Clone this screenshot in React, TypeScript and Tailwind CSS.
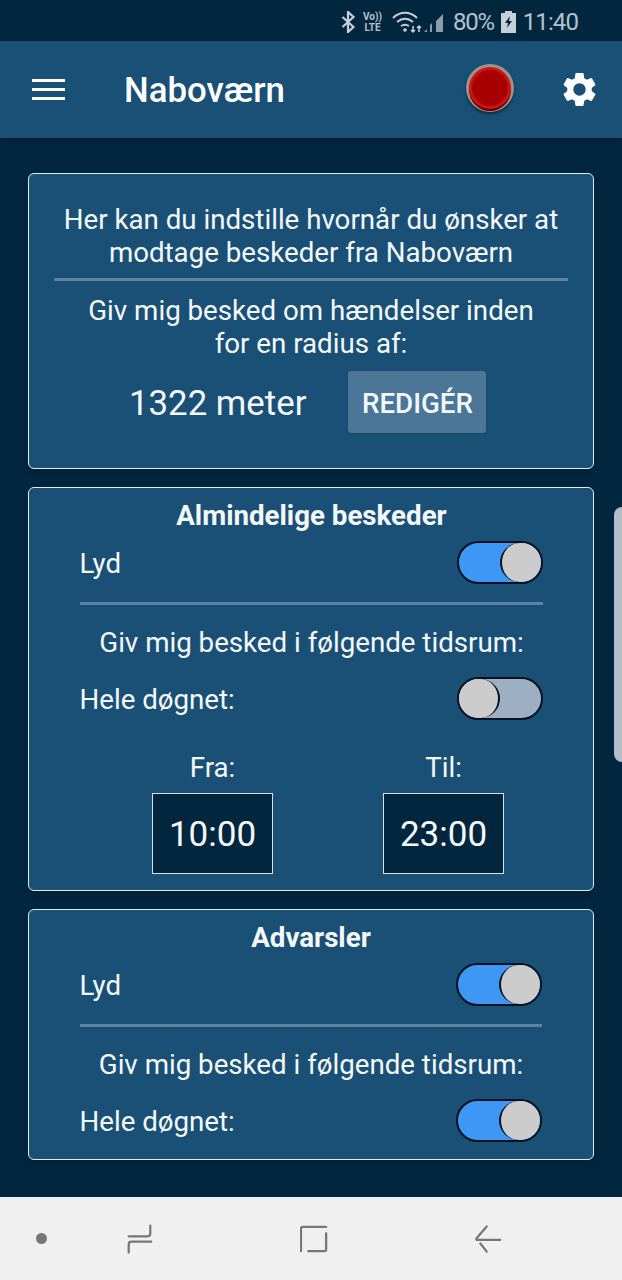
import { MdSettings } from "react-icons/md";

function Toggle({ on, dim }: { on: boolean; dim?: boolean }) {
  return (
    <div
      className={`flex h-[43px] w-[86px] rounded-full border-2 border-[#04121f] ${
        on ? "justify-end bg-[#3f97f5]" : "justify-start"
      } ${dim ? "bg-[#9db0c3]" : ""}`}
    >
      <div
        className={`h-[39px] w-[41px] rounded-full bg-[#cccccc] ${
          on ? "border-l-2" : "border-r-2"
        } border-[#04121f]`}
      />
    </div>
  );
}

function Divider({ className }: { className: string }) {
  return <div className={`h-[3px] bg-[#5b84a0] ${className}`} />;
}

function TimeBox({ label, time }: { label: string; time: string }) {
  return (
    <div className="flex w-[121px] flex-col items-center">
      <div className="text-[27.7px] leading-[30px]">{label}</div>
      <div className="mt-[10px] flex h-[81px] w-[121px] items-center justify-center border border-[#d5e2ec] bg-[#03263f] pt-[3px] text-[35px]">
        {time}
      </div>
    </div>
  );
}

function StatusBar() {
  return (
    <div className="flex h-[41px] items-center justify-end bg-[#03263f] pr-[44px] pt-[3px] text-[#b3c2cd]">
      <svg width="15" height="22" viewBox="0 0 14 22" fill="none" stroke="#c5d0d8" strokeWidth="2.2" className="mr-[6px]">
        <path d="M1 6l11 10-5.500 5V1L12 6 1 16" />
      </svg>
      <div className="mr-[9px] flex w-[21px] flex-col items-center whitespace-nowrap text-[10px] font-bold leading-[11px]">
        <span>Vo))</span>
        <span>LTE</span>
      </div>
      <svg width="52" height="24" viewBox="0 0 52 24" fill="none" className="mr-[9px]">
        <path d="M1 8c7-7 17-7 24 0M5 12c5-4 11-4 16 0M9 16c3-2 5-2 8 0" stroke="#c5d0d8" strokeWidth="2" />
        <circle cx="13" cy="20" r="1.800" fill="#c5d0d8" />
        <path d="M21 16v6M19 20l2 2 2-2M27 22v-6M25 18l2-2 2 2" stroke="#c5d0d8" strokeWidth="1.500" />
        <path d="M32 22h3v-3zM38 22h2v-9l-2 2zM44 22h7V4l-7 7z" fill="#8b9ba8" />
      </svg>
      <span className="text-[24px] leading-none tracking-[-1.3px]">80%</span>
      <svg width="15" height="22" viewBox="0 0 15 22" className="ml-[7px] mr-[7px]">
        <path d="M4 0h7v2h4v20H0V2h4z" fill="#c5d0d8" />
        <path d="M9 5L4 12h3l-1 5 5-7H8z" fill="#03263f" />
      </svg>
      <span className="text-[24px] leading-none tracking-[-0.9px]">11:40</span>
    </div>
  );
}

function Header() {
  return (
    <div className="relative flex h-[97px] items-center bg-[#1a5075] pl-[32px] pr-[22px] text-white shadow-[0_2px_4px_rgba(0,0,0,0.25)]">
      <div className="flex w-[33px] flex-col gap-[6px]">
        <div className="h-[3px] bg-white" />
        <div className="h-[3px] bg-white" />
        <div className="h-[3px] bg-white" />
      </div>
      <div className="ml-[59px] mt-[2px] flex-1 text-[34.8px] font-medium">Naboværn</div>
      <div className="mb-[3px] mr-[45px] flex h-[48px] w-[48px] items-center justify-center rounded-full bg-[#99948e] shadow-[0_2px_3px_rgba(0,0,0,0.5)]">
        <div className="h-[42px] w-[42px] rounded-full border-[3px] border-[#cf1313] bg-[#a80000] shadow-[0_2px_0_#600]" />
      </div>
      <MdSettings size={41} />
    </div>
  );
}

function BottomNav() {
  return (
    <div className="flex h-[83px] items-center bg-[#f0f0f0] pl-[36px]">
      <div className="h-[11px] w-[11px] rounded-full bg-[#777777]" />
      <svg width="27" height="32" viewBox="0 0 30 32" fill="none" stroke="#777777" strokeWidth="2.500" strokeLinecap="round" className="ml-[79px]">
        <path d="M27 1v9q0 3-3 3H3M28 19H6q-3 0-3 3v9" />
      </svg>
      <svg width="28" height="30" viewBox="0 0 30 30" fill="none" stroke="#777777" strokeWidth="2.500" strokeLinecap="round" className="ml-[147px]">
        <path d="M1 28V4q0-2 2-2h25M9 28h17q2 0 2-2V9" />
      </svg>
      <svg width="27" height="30" viewBox="0 0 30 30" fill="none" stroke="#777777" strokeWidth="2.500" strokeLinecap="round" className="ml-[147px]">
        <path d="M13 1L2 14q-1 1 0 2h26M6 20l7 9" />
      </svg>
    </div>
  );
}

export default function App() {
  return (
    <div className="relative flex h-[1280px] w-[622px] flex-col overflow-hidden bg-[#03263f] font-['Roboto',sans-serif] text-[#f4f8fb]">
      <StatusBar />
      <Header />

      <main className="flex flex-1 flex-col gap-[18px] px-[28px] pt-[35px]">
        <section className="flex h-[296px] flex-col items-center rounded-[6px] border border-[#e4edf3] bg-[#1a5075] px-[25px] pt-[29px] shadow-md">
          <p className="text-center text-[27.7px] leading-[33px]">
            Her kan du indstille hvornår du ønsker at
            <br />
            modtage beskeder fra Naboværn
          </p>
          <Divider className="mt-[9px] w-full" />
          <p className="mt-[13px] text-center text-[27.7px] leading-[33px]">
            Giv mig besked om hændelser inden
            <br />
            for en radius af:
          </p>
          <div className="mt-[11px] flex w-full items-center pl-[75px]">
            <span className="pt-[2px] text-[34.8px]">1322 meter</span>
            <button className="ml-[42px] h-[62px] w-[138px] rounded-[3px] bg-[#4b7698] pt-[3px] text-[27.7px] font-medium shadow">
              REDIGÉR
            </button>
          </div>
        </section>

        <section className="flex h-[404px] flex-col rounded-[6px] border border-[#e4edf3] bg-[#1a5075] pl-[51px] pr-[50px] pt-[13px] shadow-md">
          <h2 className="text-center text-[27.7px] font-bold leading-[30px]">Almindelige beskeder</h2>
          <div className="mt-[10px] flex items-center justify-between text-[27.7px] leading-[30px]">
            <span className="-ml-[0.5px] pt-[2px]">Lyd</span>
            <Toggle on />
          </div>
          <Divider className="mt-[18px]" />
          <p className="mt-[23px] text-center text-[27.7px] leading-[30px]">Giv mig besked i følgende tidsrum:</p>
          <div className="mt-[19px] flex items-center justify-between text-[27.7px] leading-[30px]">
            <span className="-ml-[0.5px] pt-[2px]">Hele døgnet:</span>
            <Toggle on={false} dim />
          </div>
          <div className="mt-[33px] flex gap-[110px] pl-[72px]">
            <TimeBox label="Fra:" time="10:00" />
            <TimeBox label="Til:" time="23:00" />
          </div>
        </section>

        <section className="flex h-[251px] flex-col rounded-[6px] border border-[#e4edf3] bg-[#1a5075] pl-[51px] pr-[51px] pt-[13px] shadow-md">
          <h2 className="text-center text-[27.7px] font-bold leading-[30px]">Advarsler</h2>
          <div className="mt-[10px] flex items-center justify-between text-[27.7px] leading-[30px]">
            <span className="-ml-[0.5px] pt-[2px]">Lyd</span>
            <Toggle on />
          </div>
          <Divider className="mt-[18px]" />
          <p className="mt-[23px] text-center text-[27.7px] leading-[30px]">Giv mig besked i følgende tidsrum:</p>
          <div className="mt-[19px] flex items-center justify-between text-[27.7px] leading-[30px]">
            <span className="-ml-[0.5px] pt-[2px]">Hele døgnet:</span>
            <Toggle on />
          </div>
        </section>
      </main>

      <BottomNav />

      <div className="absolute right-0 top-[507px] h-[255px] w-[8px] rounded-l-[8px] bg-[#b4bec7]" />
    </div>
  );
}
